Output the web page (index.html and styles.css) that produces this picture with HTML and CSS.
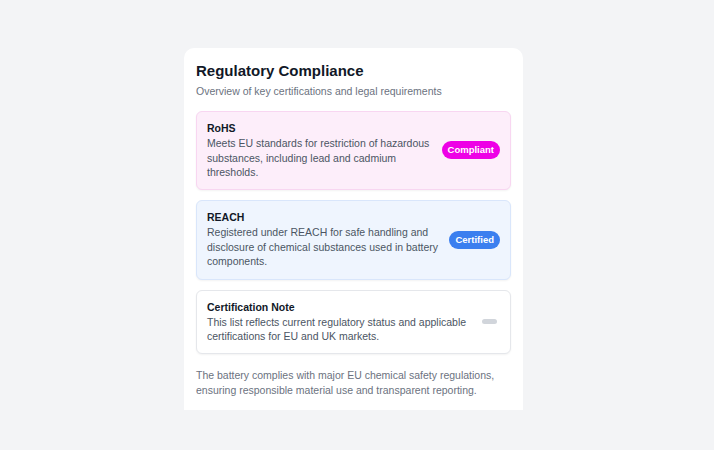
FILE: index.html
```html
<!DOCTYPE html>
<html lang="en">
<head>
    <meta charset="UTF-8">
    <meta name="viewport" content="width=device-width, initial-scale=1.0">
    <title>Regulatory Compliance</title>
    <link rel="stylesheet" href="styles.css">
</head>
<body>
    <main class="panel">
        <h1 class="panel-title">Regulatory Compliance</h1>
        <p class="panel-subtitle">Overview of key certifications and legal requirements</p>

        <div class="item item-pink">
            <div class="item-text">
                <div class="item-title">RoHS</div>
                <div class="item-desc">Meets EU standards for restriction of hazardous substances, including lead and cadmium thresholds.</div>
            </div>
            <span class="badge badge-pink">Compliant</span>
        </div>

        <div class="item item-blue">
            <div class="item-text">
                <div class="item-title">REACH</div>
                <div class="item-desc">Registered under REACH for safe handling and disclosure of chemical substances used in battery components.</div>
            </div>
            <span class="badge badge-blue">Certified</span>
        </div>

        <div class="item item-plain">
            <div class="item-text">
                <div class="item-title">Certification Note</div>
                <div class="item-desc">This list reflects current regulatory status and applicable certifications for EU and UK markets.</div>
            </div>
            <span class="badge badge-empty"></span>
        </div>

        <p class="panel-footer">The battery complies with major EU chemical safety regulations, ensuring responsible material use and transparent reporting.</p>
    </main>
</body>
</html>
```

FILE: styles.css
```css
body {
    font-family: "Liberation Sans", Arial, sans-serif;
    margin: 0;
    padding: 48px 7px 0 0;
    background: #f3f4f6;
    color: #111827;
    display: flex;
    justify-content: center;
    min-height: 100vh;
    box-sizing: border-box;
}
.panel {
    width: 339px;
    align-self: flex-start;
    background: #fff;
    border-radius: 10px 10px 0 0;
    padding: 13px 12px 12px;
    box-sizing: border-box;
}
.panel-title {
    margin: 0;
    font-size: 15px;
    line-height: 20px;
    font-weight: bold;
}
.panel-subtitle {
    margin: 3px 0 12px;
    font-size: 10.5px;
    line-height: 15px;
    color: #6b7280;
}
.item {
    display: flex;
    align-items: center;
    gap: 10px;
    padding: 9px 10px 9.5px;
    border-radius: 6px;
    border: 1px solid #e5e7eb;
    margin-bottom: 10px;
    box-shadow: 0 1px 2px rgba(0, 0, 0, 0.05);
}
.item-pink {
    background: #fdeefa;
    border-color: #f8d6f1;
}
.item-blue {
    background: #eff5fe;
    border-color: #d9e6fb;
}
.item-plain {
    background: #fff;
}
.item-text {
    flex: 1;
}
.item-title {
    font-size: 10.5px;
    line-height: 15px;
    font-weight: bold;
}
.item-desc {
    font-size: 10.5px;
    line-height: 14.6px;
    color: #4b5563;
}
.badge {
    font-size: 9.5px;
    font-weight: bold;
    color: #fff;
    border-radius: 10px;
    padding: 0 6px;
    height: 18px;
    line-height: 18px;
    white-space: nowrap;
}
.badge-pink {
    background: #ee00e6;
}
.badge-blue {
    background: #3b7fef;
}
.badge-empty {
    background: #d1d5db;
    height: 5px;
    width: 3px;
    border-radius: 3px;
    margin-right: 3px;
}
.panel-footer {
    margin: 14px 0 0;
    font-size: 10.5px;
    line-height: 15px;
    color: #6b7280;
}
```
